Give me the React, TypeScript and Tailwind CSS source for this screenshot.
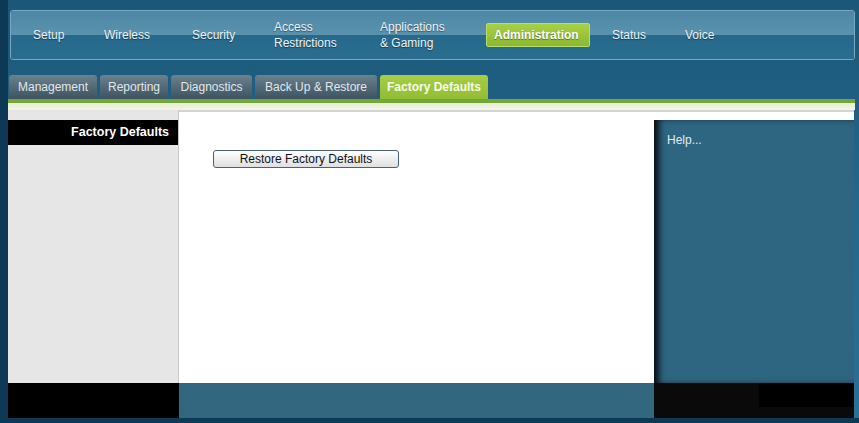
const navItems = [
  { label: ['Setup'], w: 'w-[71px]' },
  { label: ['Wireless'], w: 'w-[88px]' },
  { label: ['Security'], w: 'w-[82px]' },
  { label: ['Access', 'Restrictions'], w: 'w-[106px]' },
  { label: ['Applications', '& Gaming'], w: 'w-[106px]' },
];

const tabs = [
  { label: 'Management', w: 'w-[88px]' },
  { label: 'Reporting', w: 'w-[68px]' },
  { label: 'Diagnostics', w: 'w-[81px]' },
  { label: 'Back Up & Restore', w: 'w-[122px]' },
];

const App = () => {
  return (
    <div className="w-[859px] h-[423px] overflow-hidden bg-[#0d3957] pl-[8px] pb-[5px] flex flex-col font-['Liberation_Sans',Arial,sans-serif]">
      <div className="flex-1 flex flex-col bg-gradient-to-b from-[#1a5779] via-[#26688a] to-[#2c6f90]">
        {/* Top navigation */}
        <div className="pt-[10px] pl-[2px] pr-[4px]">
          <div className="relative h-[50px] rounded-[3px] border border-[#78a9c2] overflow-hidden">
            <div className="absolute inset-x-0 top-0 h-[25px] bg-gradient-to-b from-[#4d87a5] to-[#5b93ae]" />
            <div className="absolute inset-x-0 bottom-0 h-[24px] bg-gradient-to-b from-[#26698c] to-[#2a6d8f]" />
            <div className="relative h-full flex items-center pl-[22px] text-[12px] text-[#eef4f7] [text-shadow:0_1px_1px_rgba(0,0,0,0.45)]">
              {navItems.map((item) => (
                <div key={item.label[0]} className={`${item.w} shrink-0 leading-[16px]`}>
                  {item.label.map((l) => (
                    <div key={l}>{l}</div>
                  ))}
                </div>
              ))}
              <div className="w-[104px] h-[24px] shrink-0 rounded-[2px] border border-[#b9dc6a] bg-gradient-to-b from-[#a9d044] to-[#8cb82f] flex items-center pl-[7px] font-bold text-white">
                Administration
              </div>
              <div className="w-[73px] shrink-0 ml-[22px]">Status</div>
              <div className="shrink-0">Voice</div>
            </div>
          </div>
        </div>

        {/* Sub tabs */}
        <div className="mt-[15px] h-[24px] pl-[1px] flex gap-[3px] text-[12px]">
          {tabs.map((t) => (
            <div
              key={t.label}
              className={`${t.w} h-full rounded-t-[3px] bg-gradient-to-b from-[#6b818e] to-[#3d5361] text-[#e2e8eb] flex items-center justify-center`}
            >
              {t.label}
            </div>
          ))}
          <div className="w-[108px] h-full rounded-t-[3px] bg-gradient-to-b from-[#a7ce45] to-[#92bd34] text-[#f6fbe9] font-bold flex items-center justify-center">
            Factory Defaults
          </div>
        </div>

        <div className="h-[4px] mr-[4px] bg-[#74a63a]" />
        <div className="h-[7px] mr-[4px] bg-gradient-to-b from-[#e6eecd] to-[#f3f4ec]" />

        {/* Content */}
        <div className="h-[273px] mr-[4px] grid grid-cols-[171px_475px_200px]">
          <div className="bg-[#e6e6e6] border-r border-[#c9c9c9] pt-[10px]">
            <div className="h-[25px] bg-black text-white font-bold text-[12.5px] flex items-center justify-end pr-[9px]">
              Factory Defaults
            </div>
          </div>
          <div className="bg-white border-t-2 border-[#d4d4d4] pt-[38px] pl-[34px]">
            <button className="w-[186px] h-[18px] rounded-[3px] border border-[#4b607c] bg-gradient-to-b from-white to-[#dedfe2] text-[12px] text-[#111] flex items-center justify-center">
              Restore Factory Defaults
            </button>
          </div>
          <div className="bg-white border-t-2 border-[#d4d4d4] pt-[8px] flex flex-col">
            <div className="flex-1 bg-[#2e6581] shadow-[inset_7px_0_6px_-2px_rgba(0,0,0,0.85)] pt-[11px] pl-[13px] text-[12px] text-[#e4ecf1]">
              Help...
            </div>
          </div>
        </div>

        {/* Bottom strip */}
        <div className="h-[35px] mr-[4px] grid grid-cols-[171px_475px_200px]">
          <div className="bg-black" />
          <div className="bg-[#33677f]" />
          <div className="bg-[#0b0a0a] pl-[105px]">
            <div className="h-[24px] bg-black" />
          </div>
        </div>
      </div>
    </div>
  );
};

export default App;
